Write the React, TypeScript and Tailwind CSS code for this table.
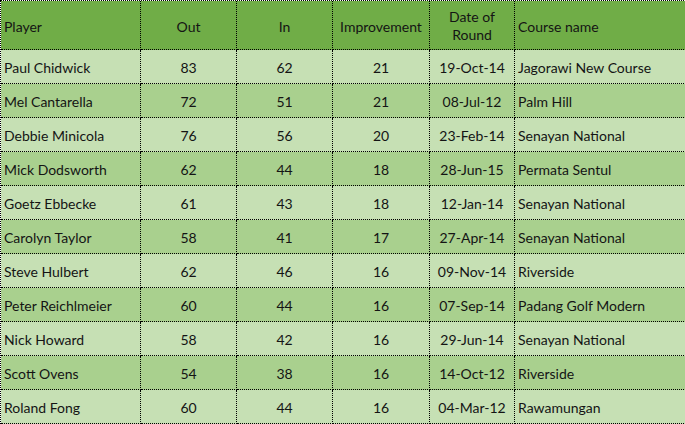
import React from 'react';

type Round = {
  player: string;
  out: number;
  inn: number;
  improvement: number;
  date: string;
  course: string;
};

const rounds: Round[] = [
  { player: 'Paul Chidwick', out: 83, inn: 62, improvement: 21, date: '19-Oct-14', course: 'Jagorawi New Course' },
  { player: 'Mel Cantarella', out: 72, inn: 51, improvement: 21, date: '08-Jul-12', course: 'Palm Hill' },
  { player: 'Debbie Minicola', out: 76, inn: 56, improvement: 20, date: '23-Feb-14', course: 'Senayan National' },
  { player: 'Mick Dodsworth', out: 62, inn: 44, improvement: 18, date: '28-Jun-15', course: 'Permata Sentul' },
  { player: 'Goetz Ebbecke', out: 61, inn: 43, improvement: 18, date: '12-Jan-14', course: 'Senayan National' },
  { player: 'Carolyn Taylor', out: 58, inn: 41, improvement: 17, date: '27-Apr-14', course: 'Senayan National' },
  { player: 'Steve Hulbert', out: 62, inn: 46, improvement: 16, date: '09-Nov-14', course: 'Riverside' },
  { player: 'Peter Reichlmeier', out: 60, inn: 44, improvement: 16, date: '07-Sep-14', course: 'Padang Golf Modern' },
  { player: 'Nick Howard', out: 58, inn: 42, improvement: 16, date: '29-Jun-14', course: 'Senayan National' },
  { player: 'Scott Ovens', out: 54, inn: 38, improvement: 16, date: '14-Oct-12', course: 'Riverside' },
  { player: 'Roland Fong', out: 60, inn: 44, improvement: 16, date: '04-Mar-12', course: 'Rawamungan' },
];

const cell = 'flex items-center border-r border-b border-dotted border-black';

export default function App() {
  return (
    <div className="w-[685px] h-[424px] overflow-hidden bg-white">
      <div
        className="w-[720px] border-t border-l border-dotted border-black text-[14px] text-[#141414]"
        style={{ fontFamily: 'Lato, "Open Sans", sans-serif' }}
      >
        {/* Header */}
        <div className="flex h-[49px] bg-[#70ad47]">
          <div className={`${cell} w-[140px] pl-[3px] pt-[3px]`}>Player</div>
          <div className={`${cell} w-[96px] justify-center pt-[3px]`}>Out</div>
          <div className={`${cell} w-[96px] justify-center pt-[3px]`}>In</div>
          <div className={`${cell} w-[97px] justify-center pt-[3px]`}>Improvement</div>
          <div className={`${cell} w-[85px] justify-center text-center leading-[18px] pt-[2px]`}>
            Date of
            <br />
            Round
          </div>
          <div className={`${cell} flex-1 pl-[3px] pt-[3px]`}>Course name</div>
        </div>

        {/* Rows */}
        {rounds.map((r, i) => (
          <div
            key={r.player}
            className={`flex h-[34px] ${i % 2 === 0 ? 'bg-[#c6e0b4]' : 'bg-[#a9d08e]'}`}
          >
            <div className={`${cell} w-[140px] pl-[3px] pt-[2px]`}>{r.player}</div>
            <div className={`${cell} w-[96px] justify-center pt-[2px]`}>{r.out}</div>
            <div className={`${cell} w-[96px] justify-center pt-[2px]`}>{r.inn}</div>
            <div className={`${cell} w-[97px] justify-center pt-[2px]`}>{r.improvement}</div>
            <div className={`${cell} w-[85px] justify-center pt-[2px]`}>{r.date}</div>
            <div className={`${cell} flex-1 pl-[3px] pt-[2px]`}>{r.course}</div>
          </div>
        ))}
      </div>
    </div>
  );
}
